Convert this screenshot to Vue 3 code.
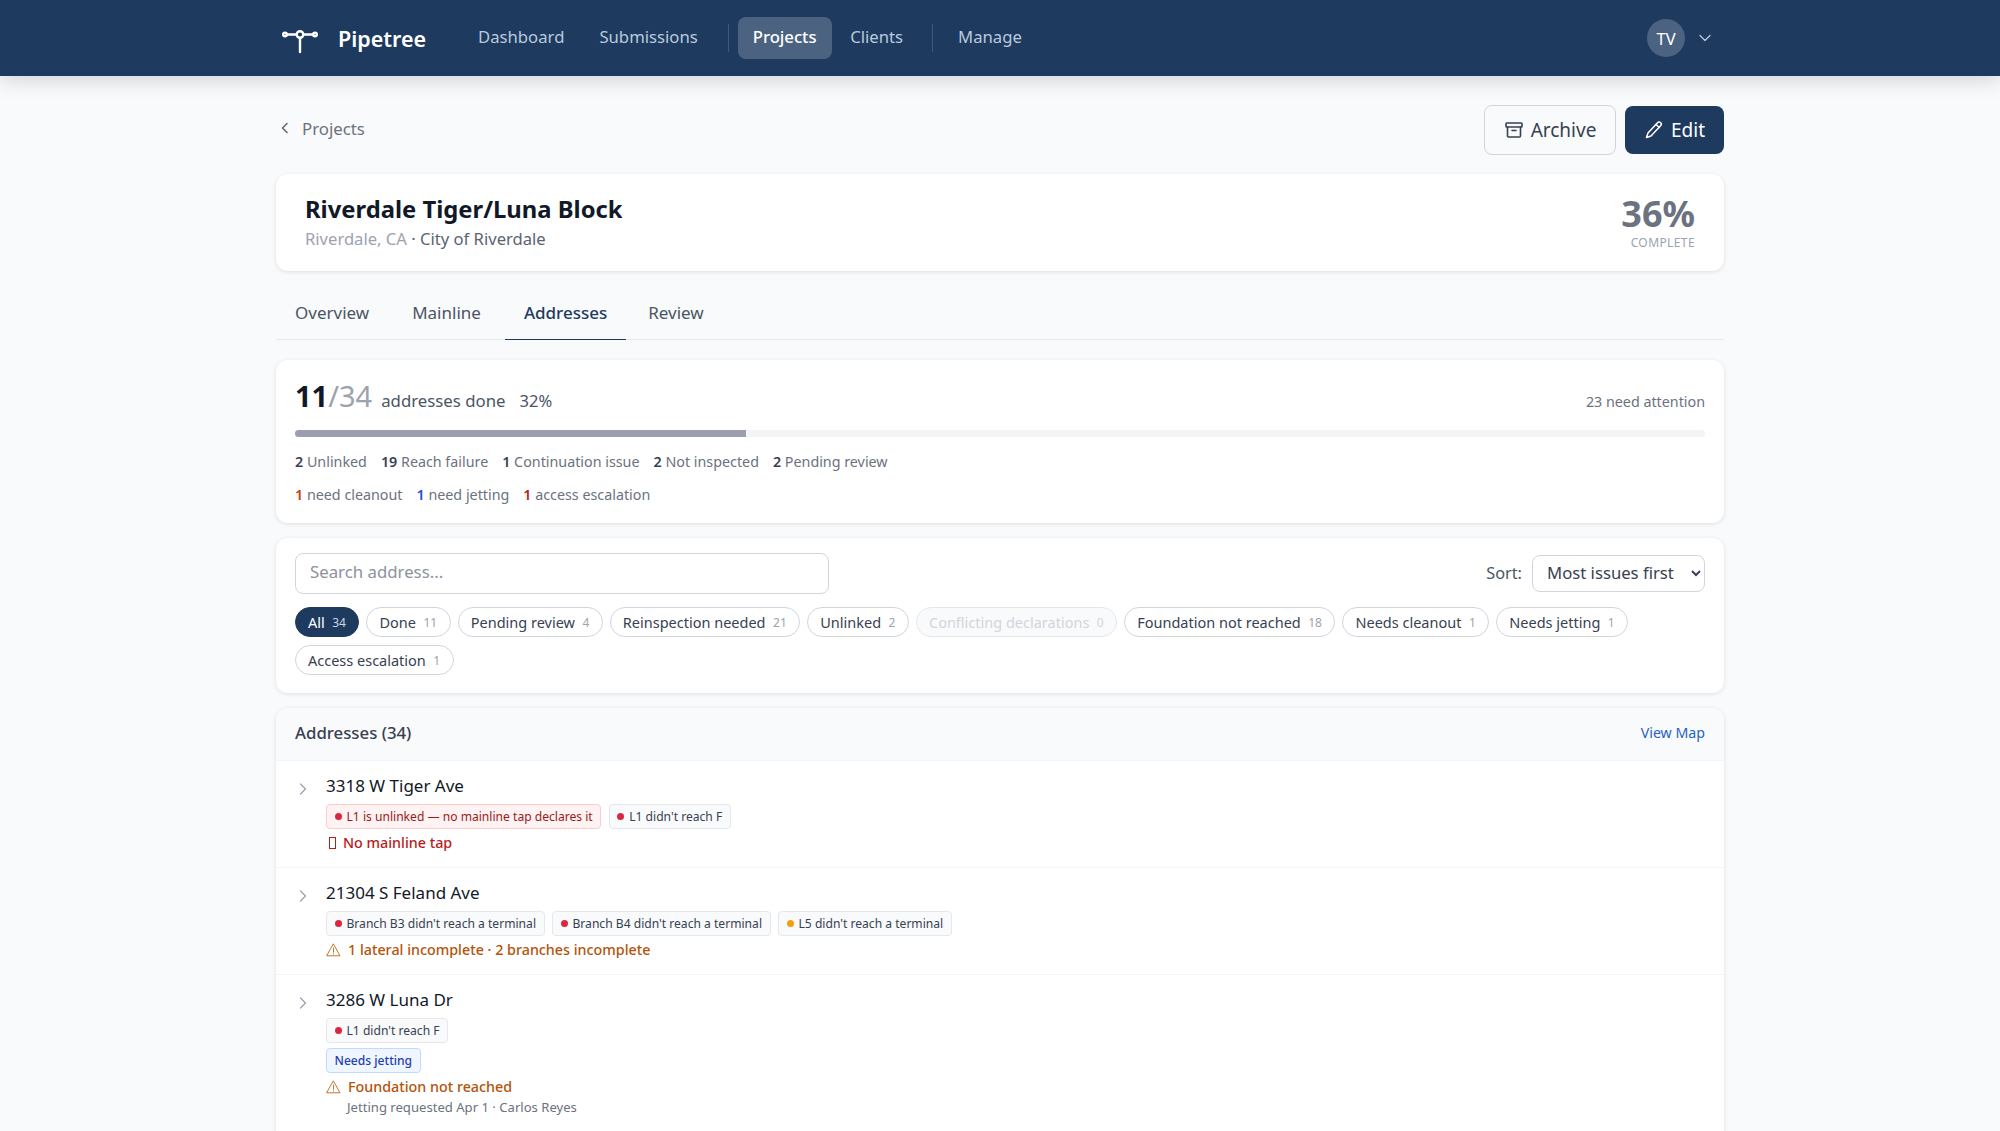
<script setup>
const navA = ['Dashboard', 'Submissions']
const stats = [['2','Unlinked'],['19','Reach failure'],['1','Continuation issue'],['2','Not inspected'],['2','Pending review']]
const needs = [['1','need cleanout','orange'],['1','need jetting','blue'],['1','access escalation','red']]
const chips = [
  ['All','34','active'],['Done','11',''],['Pending review','4',''],['Reinspection needed','21',''],['Unlinked','2',''],
  ['Conflicting declarations','0','disabled'],['Foundation not reached','18',''],['Needs cleanout','1',''],['Needs jetting','1',''],['Access escalation','1','']
]
</script>

<template>
  <div class="page">
    <header class="topbar">
      <div class="topbar-inner">
        <div class="brand">
          <svg class="logo" width="36" height="24" viewBox="0 0 36 24" fill="none" stroke="#fff" stroke-width="2.400" stroke-linecap="round">
            <path d="M5 4.500H14.500M21.500 4.500H31M18 8V22" />
            <circle cx="18" cy="4.500" r="3.300" />
            <circle cx="3" cy="4.500" r="1.800" />
            <circle cx="33" cy="4.500" r="1.800" />
          </svg>
          <span class="brand-name">Pipetree</span>
        </div>
        <nav class="nav">
          <a v-for="n in navA" :key="n" class="nav-link">{{ n }}</a>
          <span class="nav-sep first"></span>
          <a class="nav-link active">Projects</a>
          <a class="nav-link">Clients</a>
          <span class="nav-sep"></span>
          <a class="nav-link">Manage</a>
        </nav>
        <div class="user">
          <span class="avatar">TV</span>
          <svg width="14" height="14" viewBox="0 0 14 14" fill="none" stroke="#b4c4d8" stroke-width="1.400" stroke-linecap="round" stroke-linejoin="round"><path d="M2 4.500 7 9.500 12 4.500" /></svg>
        </div>
      </div>
    </header>

    <main class="main">
      <div class="crumbs">
        <a class="back">
          <svg width="12" height="14" viewBox="0 0 12 14" fill="none" stroke="#5b6472" stroke-width="1.500" stroke-linecap="round" stroke-linejoin="round"><path d="M8 2.500 3.500 7 8 11.500" /></svg>
          <span>Projects</span>
        </a>
        <div class="actions">
          <button class="btn ghost">
            <svg width="20" height="20" viewBox="0 0 20 20" fill="none" stroke="#374151" stroke-width="1.600" stroke-linecap="round" stroke-linejoin="round"><rect x="2" y="3" width="16" height="4" rx="0.800" /><path d="M3.500 7V16a1 1 0 0 0 1 1h11a1 1 0 0 0 1-1V7M8 10.500h4" /></svg>
            Archive
          </button>
          <button class="btn primary">
            <svg width="20" height="20" viewBox="0 0 20 20" fill="none" stroke="#fff" stroke-width="1.500" stroke-linecap="round" stroke-linejoin="round"><path d="M13.500 2.800a2 2 0 0 1 3.300 2.700L7 16l-4.500 1.500L4 13z" /><path d="M12 4.500l3.300 3" /></svg>
            Edit
          </button>
        </div>
      </div>

      <section class="card title-card">
        <div>
          <h1>Riverdale Tiger/Luna Block</h1>
          <div class="sub"><span class="light">Riverdale, CA</span> · City of Riverdale</div>
        </div>
        <div class="complete">
          <div class="pct">36%</div>
          <div class="complete-label">COMPLETE</div>
        </div>
      </section>

      <div class="tabs">
        <a class="tab">Overview</a>
        <a class="tab">Mainline</a>
        <a class="tab current">Addresses</a>
        <a class="tab">Review</a>
      </div>

      <section class="card progress-card">
        <div class="prog-head">
          <div class="prog-left">
            <span class="done">11</span><span class="total">/34</span>
            <span class="done-label">addresses done</span>
            <span class="done-pct">32%</span>
          </div>
          <span class="attention">23 need attention</span>
        </div>
        <div class="bar"><div class="bar-fill" :style="{ width: '32%' }"></div></div>
        <div class="stat-row">
          <span v-for="s in stats" :key="s[1]"><b>{{ s[0] }}</b> {{ s[1] }}</span>
        </div>
        <div class="stat-row second">
          <span v-for="s in needs" :key="s[1]"><b :class="s[2]">{{ s[0] }}</b> {{ s[1] }}</span>
        </div>
      </section>

      <section class="card filter-card">
        <div class="filter-top">
          <input class="search" placeholder="Search address..." />
          <label class="sort">
            <span class="sort-label">Sort:</span>
            <select class="sort-select"><option>Most issues first</option></select>
          </label>
        </div>
        <div class="chips">
          <button v-for="c in chips" :key="c[0]" class="chip" :class="c[2]">{{ c[0] }}<span class="count">{{ c[1] }}</span></button>
        </div>
      </section>

      <section class="card list-card">
        <div class="list-head">
          <span class="list-title">Addresses (34)</span>
          <a class="map-link">View Map</a>
        </div>

        <article class="row">
          <svg class="chev" width="8" height="12" viewBox="0 0 8 12" fill="none" stroke="#9ca3af" stroke-width="1.300" stroke-linecap="round" stroke-linejoin="round"><path d="M1.500 1 6.500 6 1.500 11" /></svg>
          <div class="row-body">
            <div class="addr">3318 W Tiger Ave</div>
            <div class="tags">
              <span class="tag danger"><i class="dot red"></i>L1 is unlinked — no mainline tap declares it</span>
              <span class="tag"><i class="dot red"></i>L1 didn't reach F</span>
            </div>
            <div class="status red-text"><span class="tofu"></span>No mainline tap</div>
          </div>
        </article>

        <article class="row">
          <svg class="chev" width="8" height="12" viewBox="0 0 8 12" fill="none" stroke="#9ca3af" stroke-width="1.300" stroke-linecap="round" stroke-linejoin="round"><path d="M1.500 1 6.500 6 1.500 11" /></svg>
          <div class="row-body">
            <div class="addr">21304 S Feland Ave</div>
            <div class="tags">
              <span class="tag"><i class="dot red"></i>Branch B3 didn't reach a terminal</span>
              <span class="tag"><i class="dot red"></i>Branch B4 didn't reach a terminal</span>
              <span class="tag"><i class="dot amber"></i>L5 didn't reach a terminal</span>
            </div>
            <div class="status amber-text">
              <svg class="warn" width="15" height="14" viewBox="0 0 15 14" fill="none" stroke="#c2772f" stroke-width="1" stroke-linejoin="round" stroke-linecap="round"><path d="M7.500 1.200 14 12.800H1zM7.500 5v4.200M7.500 10.800v.3" /></svg>
              1 lateral incomplete · 2 branches incomplete
            </div>
          </div>
        </article>

        <article class="row last">
          <svg class="chev" width="8" height="12" viewBox="0 0 8 12" fill="none" stroke="#9ca3af" stroke-width="1.300" stroke-linecap="round" stroke-linejoin="round"><path d="M1.500 1 6.500 6 1.500 11" /></svg>
          <div class="row-body">
            <div class="addr">3286 W Luna Dr</div>
            <div class="tags">
              <span class="tag"><i class="dot red"></i>L1 didn't reach F</span>
            </div>
            <div class="tags tight">
              <span class="tag info">Needs jetting</span>
            </div>
            <div class="status amber-text">
              <svg class="warn" width="15" height="14" viewBox="0 0 15 14" fill="none" stroke="#c2772f" stroke-width="1" stroke-linejoin="round" stroke-linecap="round"><path d="M7.500 1.200 14 12.800H1zM7.500 5v4.200M7.500 10.800v.3" /></svg>
              Foundation not reached
            </div>
            <div class="note">Jetting requested Apr 1 · Carlos Reyes</div>
          </div>
        </article>
      </section>
    </main>
  </div>
</template>

<style>
html, body { margin: 0; background: #f9fafb; }
html { overflow: hidden; }
</style>

<style scoped>
* { box-sizing: border-box; }
.page { font-family: "Noto Sans", sans-serif; color: #374151; height: 1131px; overflow: hidden; background: #f9fafb; }
.topbar { height: 76px; background: #1e3a5f; box-shadow: 0 4px 20px rgba(0,0,0,.16); position: relative; }
.topbar-inner { width: 1448px; margin: 0 auto; height: 100%; display: flex; align-items: center; padding-left: 6px; }
.brand { display: flex; align-items: center; gap: 20px; width: 181px; flex: none; }
.logo { display: block; margin-top: 7px; }
.brand-name { color: #fff; font-size: 21.500px; font-weight: 600; }
.nav { display: flex; align-items: center; gap: 5px; font-size: 16.700px; }
.nav-link { color: #b8cade; padding: 0 15px 3px; height: 42px; display: flex; align-items: center; border-radius: 8px; }
.nav-link.active { color: #fff; background: #4b6380; font-weight: 500; margin-right: -1.500px; }
.nav-sep { width: 1px; height: 28px; background: #3e5877; margin: 0 5px 0 9px; }
.nav-sep.first { margin: 0 4px 0 10px; }
.user { margin-left: auto; display: flex; align-items: center; gap: 13px; padding-right: 12px; }
.avatar { width: 38px; height: 38px; border-radius: 50%; background: #4b6380; color: #fff; font-size: 16.500px; display: flex; align-items: center; justify-content: center; }
.main { width: 1448px; margin: 0 auto; }
.crumbs { display: flex; justify-content: space-between; align-items: center; height: 98px; padding-top: 8px; }
.back { display: flex; align-items: center; gap: 11px; color: #6b7280; font-size: 16.800px; padding-left: 3px; margin-top: -2px; }
.actions { display: flex; gap: 9px; align-items: center; margin-top: 1px; }
.btn { font-family: inherit; font-size: 19px; display: flex; align-items: center; gap: 7px; border-radius: 8px; height: 48px; padding: 0 19px; }
.btn.ghost { background: #f9fafb; border: 1.500px solid #d1d5db; color: #374151; width: 132px; justify-content: center; padding: 0; height: 50px; }
.btn.primary { background: #1e3a5f; border: 0; color: #fff; width: 99px; justify-content: center; padding: 0; }
.card { background: #fff; border-radius: 12px; box-shadow: 0 1px 4px rgba(0,0,0,.11); }
.title-card { height: 97px; display: flex; justify-content: space-between; align-items: center; padding: 0 29px; }
h1 { margin: -2px 0 0; font-size: 23.800px; line-height: 32px; font-weight: 700; color: #111827; }
.sub { font-size: 16.600px; line-height: 24px; color: #5b6472; margin-top: 2px; }
.light { color: #9ca3af; }
.complete { text-align: right; }
.pct { font-size: 36px; line-height: 40px; font-weight: 700; color: #6b7280; }
.complete-label { font-size: 12px; line-height: 16px; color: #9ca3af; letter-spacing: .4px; margin-top: 1px; }
.tabs { display: flex; height: 69px; align-items: flex-end; border-bottom: 1.500px solid #e5e7eb; margin-bottom: 20px; }
.tab { font-size: 17px; color: #4b5563; height: 39px; display: flex; align-items: flex-start; padding: 0 19px; margin-bottom: -1px; border-bottom: 1.500px solid transparent; margin-right: 5px; line-height: 24px; }
.tab.current { color: #1e3a5f; border-bottom-color: #1e3a5f; font-weight: 500; margin-right: 3px; }
.progress-card { height: 163px; padding: 17px 19px 0 19px; }
.prog-head { display: flex; justify-content: space-between; align-items: center; height: 38px; }
.prog-left { display: flex; align-items: baseline; }
.done { font-size: 29px; font-weight: 700; color: #111827; line-height: 38px; }
.total { font-size: 29px; color: #9ca3af; line-height: 38px; }
.done-label { font-size: 16.800px; color: #4b5563; margin-left: 9px; }
.done-pct { font-size: 16.500px; color: #4b5563; margin-left: 14px; }
.attention { font-size: 14.300px; color: #6b7280; margin-top: 10px; }
.bar { height: 7px; border-radius: 4px; background: #f3f4f6; margin-top: 15px; overflow: hidden; }
.bar-fill { height: 100%; background: #9a9eae; }
.stat-row { display: flex; gap: 14px; font-size: 14.300px; line-height: 20px; color: #6b7280; margin-top: 15px; }
.stat-row.second { margin-top: 13px; }
.stat-row b { font-weight: 600; color: #374151; }
.stat-row b.orange { color: #c2410c; }
.stat-row b.blue { color: #1d4ed8; }
.stat-row b.red { color: #b91c1c; }
.filter-card { height: 155px; margin-top: 15px; padding: 15px 19px 0 19px; }
.filter-top { display: flex; justify-content: space-between; align-items: center; height: 41px; }
.search { width: 534px; height: 41px; border: 1.500px solid #d1d5db; border-radius: 8px; padding: 0 14px 5px; font-family: inherit; font-size: 16.800px; outline: 0; background: #fff; }
.search::placeholder { color: #8b929e; }
.sort { display: flex; align-items: center; gap: 10px; font-size: 16.300px; color: #4b5563; }
.sort-label { margin-top: -2px; }
.sort-select { width: 173px; height: 37px; border: 1.500px solid #d1d5db; border-radius: 8px; background: #fff; font-family: inherit; font-size: 16.700px; color: #374151; padding: 0 8px 2px 10px; }
.chips { display: flex; flex-wrap: wrap; gap: 8px 7px; margin-top: 13px; }
.chip { font-family: inherit; height: 30px; border-radius: 15px; border: 1.500px solid #d1d5db; background: #fff; color: #374151; font-size: 14.500px; padding: 0 12.500px 0 12px; display: flex; align-items: center; gap: 7.500px; white-space: nowrap; }
.chip .count { font-size: 12px; color: #9ca3af; }
.chip.active { background: #1e3a5f; border-color: #1e3a5f; color: #fff; }
.chip.active .count { color: #cbd5e1; }
.chip.disabled { background: #f9fafb; border-color: #e5e7eb; color: #d1d5db; }
.chip.disabled .count { color: #d1d5db; }
.list-card { margin-top: 15px; overflow: hidden; }
.list-head { height: 53px; display: flex; justify-content: space-between; align-items: center; padding: 0 19px 3px 19px; background: #f9fafb; border-bottom: 1px solid #f3f4f6; }
.list-title { font-size: 16.800px; font-weight: 500; color: #374151; }
.map-link { font-size: 14.200px; color: #2563c4; }
.row { display: flex; padding: 13px 19px 0 19px; border-bottom: 1px solid #f3f4f6; min-height: 107px; }
.row.last { padding-bottom: 40px; border-bottom: 0; }
.chev { margin: 9px 19px 0 4px; flex: none; }
.row-body { flex: 1; }
.addr { font-size: 17px; line-height: 24px; color: #111827; font-weight: 400; }
.tags { display: flex; gap: 7.500px; margin-top: 6px; }
.tags.tight { margin-top: 5px; }
.tag { display: inline-flex; align-items: center; height: 25px; padding: 0 7.500px; border: 1px solid #e5e7eb; border-radius: 4px; background: #f9fafb; font-size: 12.100px; color: #374151; }
.tag.danger { background: #fef2f2; border-color: #fecaca; color: #991b1b; }
.tag.info { background: #eff6ff; border-color: #bfdbfe; color: #1e40af; font-weight: 500; }
.dot { width: 7px; height: 7px; border-radius: 50%; margin-right: 5px; }
.dot.red { background: #dc2640; }
.dot.amber { background: #f59e0b; }
.status { display: flex; align-items: center; font-size: 14.300px; line-height: 20px; margin-top: 4px; font-weight: 500; }
.red-text { color: #b91c1c; }
.amber-text { color: #b45309; }
.tofu { width: 7px; height: 12px; border: 1.200px solid #b91c1c; margin: 0 7px 0 3px; }
.warn { margin-right: 7px; }
.note { font-size: 13.100px; line-height: 18px; color: #6b7280; margin: 1px 0 0 21px; }
</style>
